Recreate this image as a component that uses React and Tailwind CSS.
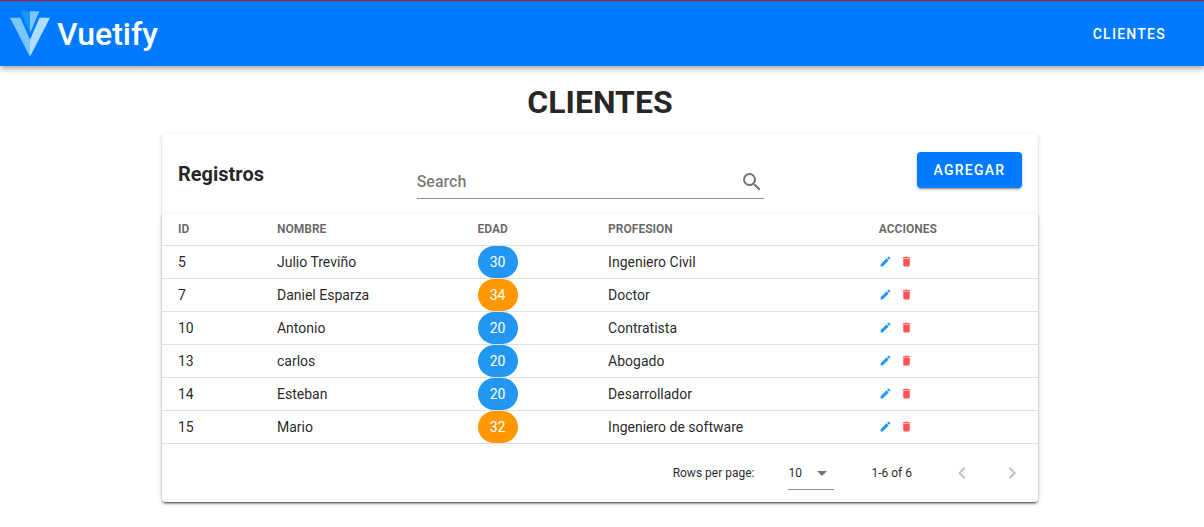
import { useState } from "react";

const clientes = [
  { id: 5, nombre: "Julio Treviño", edad: 30, profesion: "Ingeniero Civil" },
  { id: 7, nombre: "Daniel Esparza", edad: 34, profesion: "Doctor" },
  { id: 10, nombre: "Antonio", edad: 20, profesion: "Contratista" },
  { id: 13, nombre: "carlos", edad: 20, profesion: "Abogado" },
  { id: 14, nombre: "Esteban", edad: 20, profesion: "Desarrollador" },
  { id: 15, nombre: "Mario", edad: 32, profesion: "Ingeniero de software" },
];

const paths = {
  magnify:
    "M9.5,3A6.5,6.5 0 0,1 16,9.5C16,11.11 15.41,12.59 14.44,13.73L14.71,14H15.5L20.5,19L19,20.5L14,15.5V14.71L13.73,14.44C12.59,15.41 11.11,16 9.5,16A6.5,6.5 0 0,1 3,9.5A6.5,6.5 0 0,1 9.5,3M9.5,5C7,5 5,7 5,9.5C5,12 7,14 9.5,14C12,14 14,12 14,9.5C14,7 12,5 9.5,5Z",
  pencil:
    "M20.71,7.04C21.1,6.65 21.1,6 20.71,5.63L18.37,3.29C18,2.9 17.35,2.9 16.96,3.29L15.12,5.12L18.87,8.87M3,17.25V21H6.75L17.81,9.93L14.06,6.18L3,17.25Z",
  trash:
    "M19,4H15.5L14.5,3H9.5L8.5,4H5V6H19M6,19A2,2 0 0,0 8,21H16A2,2 0 0,0 18,19V7H6V19Z",
  menuDown: "M7,10L12,15L17,10H7Z",
  chevronLeft:
    "M15.41,16.58L10.83,12L15.41,7.41L14,6L8,12L14,18L15.41,16.58Z",
  chevronRight:
    "M8.59,16.58L13.17,12L8.59,7.41L10,6L16,12L10,18L8.59,16.58Z",
};

function Icon({ name, className = "size-6" }) {
  return (
    <svg viewBox="0 0 24 24" className={className} fill="currentColor" aria-hidden="true">
      <path d={paths[name]} />
    </svg>
  );
}

function Logo() {
  return (
    <svg viewBox="0 0 87.5 100" className="h-[46px] w-10" aria-hidden="true">
      <path d="M43.75 0H23.31L43.75 48.32Z" fill="#1697f6" />
      <path d="M43.75 62.5V100L0 14.58H22.92Z" fill="#7bc6ff" />
      <path d="M43.75 0H64.19L43.75 48.32Z" fill="#7bc6ff" />
      <path d="M64.58 14.58H87.5L43.75 100V62.5Z" fill="#aeddff" />
    </svg>
  );
}

function Header() {
  return (
    <header className="relative flex h-[66px] items-center justify-between border-t border-[#b71c1c] bg-[#007bff] pr-[38px] pl-[10px] text-white shadow-[0_2px_4px_-1px_rgba(0,0,0,0.2),0_4px_5px_0_rgba(0,0,0,0.14),0_1px_10px_0_rgba(0,0,0,0.12)]">
      <a href="#inicio" className="flex items-center gap-[7px]">
        <Logo />
        <span className="text-[32px] leading-10 font-medium">Vuetify</span>
      </a>
      <nav>
        <a href="#clientes" className="text-sm font-medium tracking-[0.09em]">
          CLIENTES
        </a>
      </nav>
    </header>
  );
}

function Toolbar({ query, onQuery }) {
  return (
    <div className="flex h-20 items-center px-4">
      <h2 className="text-xl font-bold">Registros</h2>
      <div className="flex-1" />
      <div className="flex h-[50px] grow basis-[195px] items-end border-b border-black/45 pb-1 text-black/55">
        <div className="grid flex-1 text-base font-medium">
          <label
            htmlFor="search"
            className={query ? "invisible col-start-1 row-start-1" : "col-start-1 row-start-1"}
          >
            Search
          </label>
          <input
            id="search"
            type="text"
            value={query}
            onChange={(e) => onQuery(e.target.value)}
            className="col-start-1 row-start-1 w-full text-black/87 outline-none"
          />
        </div>
        <Icon name="magnify" />
      </div>
      <div className="flex-1" />
      <button
        type="button"
        className="mb-2 h-9 min-w-[105px] rounded bg-[#007bff] px-4 text-sm font-medium tracking-[0.09em] text-white shadow-[0_3px_1px_-2px_rgba(0,0,0,0.2),0_2px_2px_0_rgba(0,0,0,0.14),0_1px_5px_0_rgba(0,0,0,0.12)]"
      >
        AGREGAR
      </button>
    </div>
  );
}

function ClientesTable({ rows }) {
  return (
    <table className="w-full table-fixed text-left">
      <colgroup>
        <col className="w-[11.3%]" />
        <col className="w-[22.9%]" />
        <col className="w-[14.9%]" />
        <col className="w-[30.9%]" />
        <col className="w-[20%]" />
      </colgroup>
      <thead>
        <tr className="h-[31px] border-b border-black/12 text-xs text-black/60">
          <th className="px-4 font-bold">ID</th>
          <th className="px-4 font-bold">NOMBRE</th>
          <th className="px-4 font-bold">EDAD</th>
          <th className="px-4 font-bold">PROFESION</th>
          <th className="px-4 font-bold">ACCIONES</th>
        </tr>
      </thead>
      <tbody className="text-sm">
        {rows.map((c) => (
          <tr key={c.id} className="border-b border-black/12">
            <td className="px-4">{c.id}</td>
            <td className="px-4">{c.nombre}</td>
            <td className="px-4">
              <span
                className={`flex h-8 w-10 items-center justify-center rounded-full text-white ${
                  c.edad > 30 ? "bg-[#ff9800]" : "bg-[#2196f3]"
                }`}
              >
                {c.edad}
              </span>
            </td>
            <td className="px-4">{c.profesion}</td>
            <td className="px-4">
              <div className="flex gap-2">
                <button type="button" aria-label="Editar" className="text-[#2196f3]">
                  <Icon name="pencil" className="size-[13px]" />
                </button>
                <button type="button" aria-label="Eliminar" className="text-[#ff5252]">
                  <Icon name="trash" className="size-[13px]" />
                </button>
              </div>
            </td>
          </tr>
        ))}
      </tbody>
    </table>
  );
}

function Footer({ count }) {
  return (
    <div className="flex h-[58px] items-center justify-end pr-2 text-xs">
      <label htmlFor="rows">Rows per page:</label>
      <div className="mt-px mr-[37px] ml-[34px] grid w-[46px] items-center border-b border-black/45">
        <select
          id="rows"
          defaultValue="10"
          className="col-start-1 row-start-1 h-8 w-full appearance-none outline-none"
        >
          <option>5</option>
          <option>10</option>
          <option>15</option>
        </select>
        <span className="pointer-events-none col-start-1 row-start-1 justify-self-end text-black/55">
          <Icon name="menuDown" />
        </span>
      </div>
      <span>
        1-{count} of {count}
      </span>
      <div className="ml-8 flex gap-[14px] text-black/25">
        <button type="button" disabled aria-label="Previous page" className="flex size-9 items-center justify-center">
          <Icon name="chevronLeft" />
        </button>
        <button type="button" disabled aria-label="Next page" className="flex size-9 items-center justify-center">
          <Icon name="chevronRight" />
        </button>
      </div>
    </div>
  );
}

export default function App() {
  const [query, setQuery] = useState("");
  const rows = clientes.filter((c) =>
    `${c.id} ${c.nombre} ${c.edad} ${c.profesion}`.toLowerCase().includes(query.toLowerCase())
  );
  return (
    <div className="min-h-screen bg-white font-[Roboto,sans-serif] text-black/87">
      <Header />
      <main className="mx-auto max-w-[904px] py-3 pr-4 pl-3">
        <h1 className="mb-2 text-center text-[32px] leading-[48px] font-bold">CLIENTES</h1>
        <section className="rounded shadow-[0_3px_1px_-2px_rgba(0,0,0,0.2),0_2px_2px_0_rgba(0,0,0,0.14),0_1px_5px_0_rgba(0,0,0,0.12)]">
          <Toolbar query={query} onQuery={setQuery} />
          <div className="rounded bg-white shadow-[0_3px_1px_-2px_rgba(0,0,0,0.2),0_2px_2px_0_rgba(0,0,0,0.14),0_1px_5px_0_rgba(0,0,0,0.12)]">
            <ClientesTable rows={rows} />
            <Footer count={rows.length} />
          </div>
        </section>
      </main>
    </div>
  );
}
